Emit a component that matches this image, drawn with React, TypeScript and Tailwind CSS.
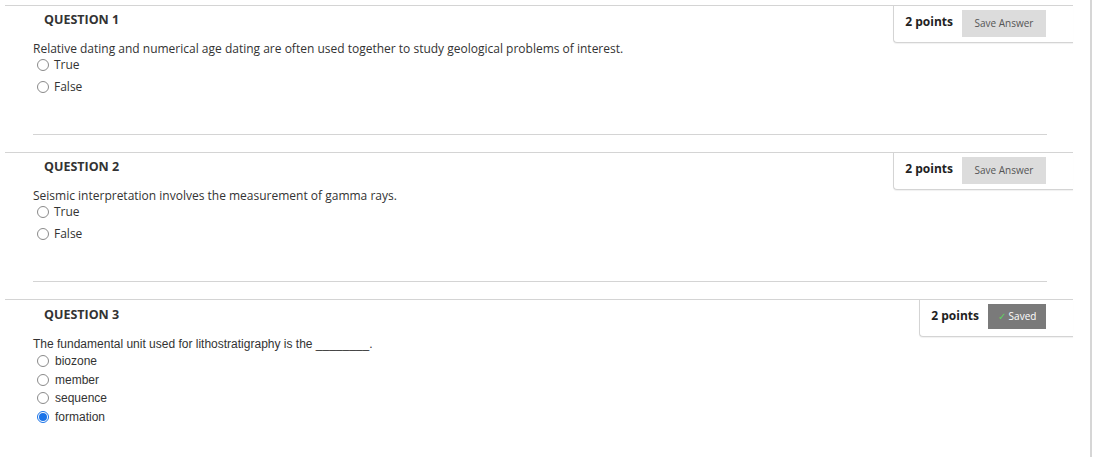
import React from 'react';

type Q = {
  n: number;
  text: string;
  options: string[];
  selected?: number;
  saved?: boolean;
  arial?: boolean;
};

const questions: Q[] = [
  {
    n: 1,
    text: 'Relative dating and numerical age dating are often used together to study geological problems of interest.',
    options: ['True', 'False'],
  },
  {
    n: 2,
    text: 'Seismic interpretation involves the measurement of gamma rays.',
    options: ['True', 'False'],
  },
  {
    n: 3,
    text: 'The fundamental unit used for lithostratigraphy is the ________.',
    options: ['biozone', 'member', 'sequence', 'formation'],
    selected: 3,
    saved: true,
    arial: true,
  },
];

function Radio({ checked }: { checked?: boolean }) {
  if (checked) {
    return (
      <span className="w-[12px] h-[12px] rounded-full border border-[#1a73e8] bg-white flex items-center justify-center shrink-0">
        <span className="w-[8px] h-[8px] rounded-full bg-[#1a73e8]" />
      </span>
    );
  }
  return <span className="w-[12px] h-[12px] rounded-full border border-[#8a8a8a] bg-white shrink-0" />;
}

function PointsBox({ saved }: { saved?: boolean }) {
  return (
    <div className="flex items-start border-l border-b border-[#d4d4d4] rounded-bl-[4px] shadow-[0_1px_1px_rgba(0,0,0,0.06)] pl-[11px] pr-[27px] h-[37px] pt-[4px] bg-white">
      <span className="font-bold text-[12px] text-[#222] mr-[9px] leading-[16px] mt-[4px]">2 points</span>
      {saved ? (
        <span className="bg-[#7a7a7a] text-white text-[10px] h-[25px] w-[58px] flex items-center justify-center gap-[3px]">
          <span className="text-[#5fd35f] text-[10px]">✓</span>Saved
        </span>
      ) : (
        <span className="bg-[#dcdcdc] text-[#555] text-[10px] h-[27px] w-[84px] flex items-center justify-center">
          Save Answer
        </span>
      )}
    </div>
  );
}

function Question({ q, last }: { q: Q; last?: boolean }) {
  const body = q.arial ? "font-['Liberation_Sans',Arial,sans-serif]" : '';
  return (
    <div className="border-t border-[#d4d4d4]">
      <div className="flex justify-between items-start">
        <h3 className={`pl-[39px] font-bold text-[12.5px] text-[#333] leading-[18px] ${q.arial ? 'pt-[6px]' : 'pt-[5px]'}`}>
          QUESTION {q.n}
        </h3>
        <PointsBox saved={q.saved} />
      </div>
      <div className={`pl-[28px] text-[12px] text-[#333] ${body}`}>
        <p className={`leading-[16px] ${q.arial ? 'mt-[-1px]' : '-mt-[2px]'}`}>{q.text}</p>
        <div className={`flex flex-col ${q.arial ? 'gap-[2.5px] mt-[1px]' : 'gap-[6px]'}`}>
          {q.options.map((o, i) => (
            <label
              key={o}
              className={`flex items-center pl-[4px] leading-[16px] ${q.arial ? 'gap-[6px]' : 'gap-[5px]'}`}
            >
              <Radio checked={q.selected === i} />
              <span>{o}</span>
            </label>
          ))}
        </div>
      </div>
      {!last && (
        <div className="ml-[28px] mr-[26px] mt-[39px] mb-[17px] border-t border-[#d4d4d4]" />
      )}
    </div>
  );
}

export default function App() {
  return (
    <div className="w-[1094px] h-[457px] bg-white overflow-hidden font-['Open_Sans',sans-serif]">
      <div className="w-[1092px] h-full border-r-2 border-[#d6d6d6] pt-[5px]">
        <div className="ml-[5px] w-[1068px]">
          {questions.map((q, i) => (
            <Question key={q.n} q={q} last={i === questions.length - 1} />
          ))}
        </div>
      </div>
    </div>
  );
}
